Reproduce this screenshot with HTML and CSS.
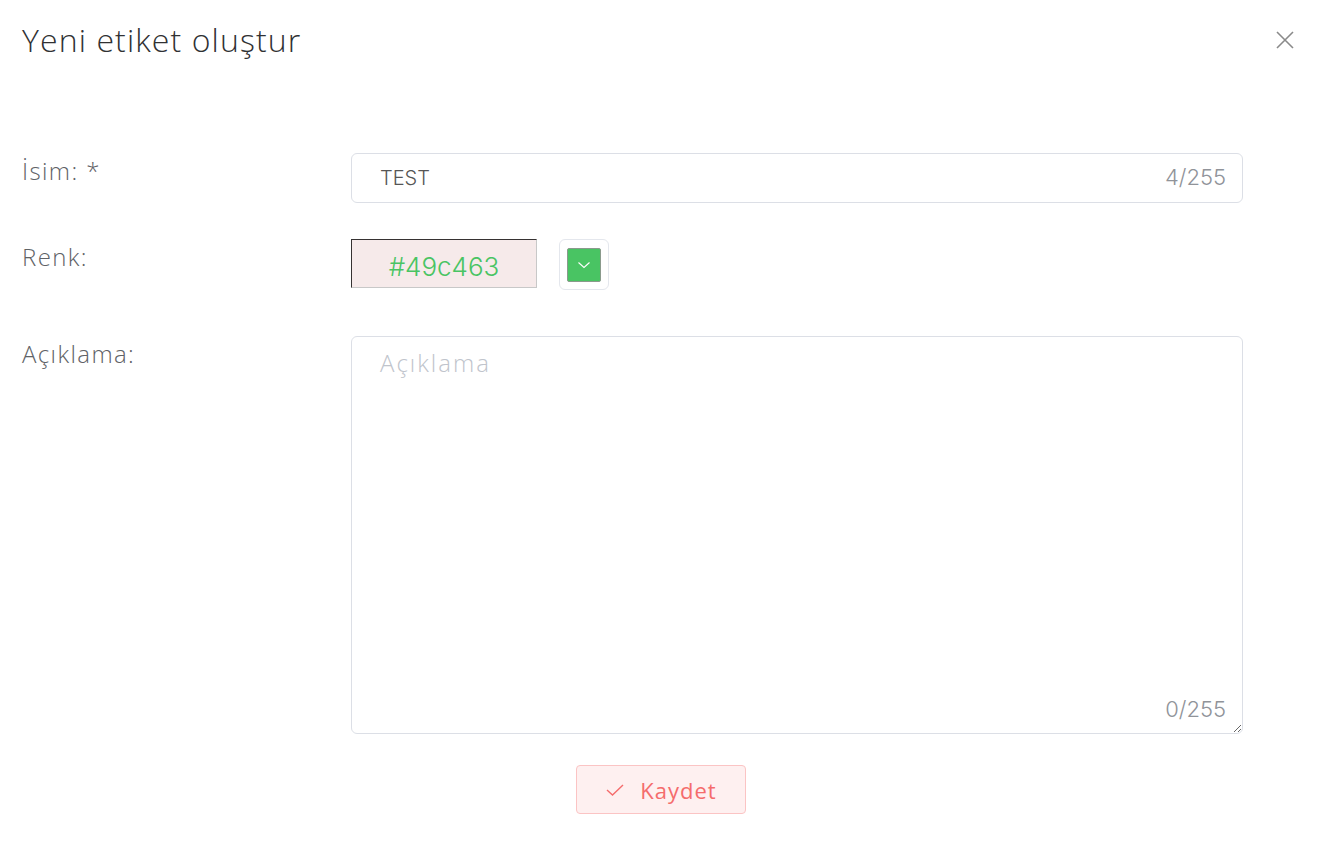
FILE: index.html
```html
<!DOCTYPE html>
<html lang="tr">
<head>
    <meta charset="UTF-8">
    <meta name="viewport" content="width=device-width, initial-scale=1.0">
    <title>Yeni etiket oluştur</title>
    <link rel="stylesheet" href="styles.css">
</head>
<body>
    <div class="dialog">
        <div class="dialog-header">
            <h1>Yeni etiket oluştur</h1>
            <button class="close-btn" aria-label="Kapat">
                <svg width="20" height="20" viewBox="0 0 20 20"><path d="M2 2L18 18M18 2L2 18" stroke="#8a8a8a" stroke-width="1.6" fill="none"/></svg>
            </button>
        </div>

        <form class="form">
            <label class="label">İsim: *</label>
            <div class="field">
                <div class="input-wrap">
                    <input type="text" class="input" value="TEST">
                    <span class="count">4/255</span>
                </div>
            </div>

            <label class="label">Renk:</label>
            <div class="field color-field">
                <input type="text" class="color-input" value="#49c463">
                <div class="picker">
                    <span class="swatch">
                        <svg width="16" height="16" viewBox="0 0 16 16"><path d="M2.5 5.5L8 10.5L13.5 5.5" stroke="#fff" stroke-width="1.1" fill="none"/></svg>
                    </span>
                </div>
            </div>

            <label class="label">Açıklama:</label>
            <div class="field">
                <div class="textarea-wrap">
                    <textarea class="textarea" placeholder="Açıklama"></textarea>
                    <span class="count count-bottom">0/255</span>
                </div>
            </div>
        </form>

        <div class="actions">
            <button class="save-btn">
                <svg width="20" height="18" viewBox="0 0 20 18"><path d="M2 9L7.5 14L18 4" stroke="#f56c6c" stroke-width="1.4" fill="none"/></svg>
                Kaydet
            </button>
        </div>
    </div>
</body>
</html>
```

FILE: styles.css
```css
body {
    margin: 0;
    background: #fff;
    font-family: 'Open Sans', 'Liberation Sans', sans-serif;
    color: #606266;
}

.dialog {
    padding: 16px 22px 0 22px;
}

.dialog-header {
    display: flex;
    justify-content: space-between;
    align-items: flex-start;
    height: 137px;
}

.dialog-header h1 {
    margin: 0;
    font-size: 32px;
    font-weight: 300;
    letter-spacing: 1.1px;
    color: #303133;
    line-height: 48px;
}

.close-btn {
    background: none;
    border: none;
    padding: 0;
    margin: 14px 5px 0 0;
    cursor: pointer;
}

.form {
    display: grid;
    grid-template-columns: 329px 892px;
    row-gap: 36px;
}

.label {
    font-size: 24px;
    font-weight: 300;
    letter-spacing: 1.4px;
    color: #606266;
    line-height: 36px;
}

.input-wrap {
    position: relative;
}

.input {
    box-sizing: border-box;
    width: 100%;
    height: 50px;
    border: 1px solid #dcdfe6;
    border-radius: 6px;
    padding: 0 28px;
    font-family: 'Inter', 'Liberation Sans', sans-serif;
    font-size: 20px;
    font-weight: 300;
    color: #555;
    outline: none;
}

.count {
    position: absolute;
    right: 17px;
    top: 11px;
    font-family: 'Inter', 'Liberation Sans', sans-serif;
    font-size: 22px;
    font-weight: 300;
    color: #909399;
}

.color-field {
    display: flex;
    align-items: flex-start;
    gap: 22px;
}

.color-input {
    box-sizing: border-box;
    width: 186px;
    height: 49px;
    margin: 0;
    border: 1px inset #c8c8c8;
    border-top-color: #8a8080;
    border-left-color: #8a8080;
    background: #f6eaea;
    text-align: center;
    font-family: 'Inter', 'Liberation Sans', sans-serif;
    font-size: 26px;
    font-weight: 300;
    color: #49c463;
    padding: 5px 0 0 0;
    outline: none;
}

.picker {
    box-sizing: border-box;
    width: 50px;
    height: 51px;
    border: 1px solid #e4e7ed;
    border-radius: 6px;
    display: flex;
    align-items: center;
    justify-content: center;
}

.swatch {
    width: 34px;
    height: 34px;
    background: #49c463;
    border: 1px solid #8a9a8c;
    border-radius: 2px;
    box-sizing: border-box;
    display: flex;
    align-items: center;
    justify-content: center;
}

.color-field + .label,
.color-field + .label + .field {
    margin-top: 10px;
}

.textarea-wrap {
    position: relative;
}

.textarea {
    box-sizing: border-box;
    display: block;
    width: 100%;
    height: 398px;
    border: 1px solid #dcdfe6;
    border-radius: 6px;
    padding: 9px 28px;
    font-family: 'Open Sans', 'Liberation Sans', sans-serif;
    font-size: 24px;
    font-weight: 300;
    letter-spacing: 2px;
    color: #606266;
    outline: none;
    resize: vertical;
}

.textarea::placeholder {
    color: #c0c4cc;
}

.count-bottom {
    top: auto;
    bottom: 12px;
}

.actions {
    display: flex;
    justify-content: center;
    margin: 31px 0 0 -22px;
    width: 1322px;
}

.save-btn {
    display: flex;
    align-items: center;
    gap: 15px;
    box-sizing: border-box;
    width: 170px;
    height: 49px;
    justify-content: center;
    background: #fef0f0;
    border: 1px solid #fbc4c4;
    border-radius: 4px;
    color: #f56c6c;
    font-family: 'Open Sans', 'Liberation Sans', sans-serif;
    font-size: 22px;
    font-weight: 500;
    letter-spacing: 1px;
    cursor: pointer;
}
```
